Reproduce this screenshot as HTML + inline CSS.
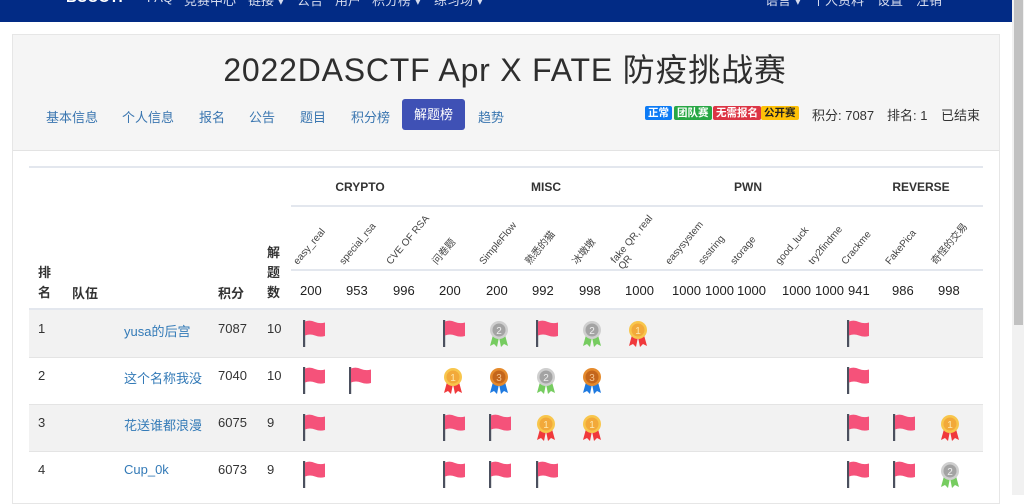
<!DOCTYPE html>
<html><head><meta charset="utf-8"><style>
*{margin:0;padding:0;box-sizing:border-box}
body{width:1024px;height:495px;overflow:hidden;background:#fff;font-family:"Liberation Sans","Noto Sans CJK SC",sans-serif;position:relative;color:#333}
.a{position:absolute;white-space:nowrap}
.nav{position:absolute;left:0;top:0;width:1012px;height:22px;background:#022b85;overflow:hidden}
.nav span{position:absolute;top:-10px;color:#d6dcee;font-size:13px}
.sb{position:absolute;left:1012px;top:0;width:12px;height:495px;background:#f1f1f1}
.sb div{position:absolute;left:2px;top:0;width:9px;height:325px;background:#c1c1c1}
.card{position:absolute;left:12px;top:34px;width:988px;height:470px;border:1px solid #e6e6e6;background:#fff}
.hd{position:absolute;left:0;top:0;width:986px;height:116px;background:#f5f5f5;border-bottom:1px solid #e3e3e3}
.tab{position:absolute;top:107px;color:#3a76b0;font-size:13px}
.bd{position:absolute;top:106px;height:14px;font-size:10.5px;font-weight:bold;color:#fff;border-radius:2px;padding:0 3px;line-height:14px}
.hl{position:absolute;height:2px;background:#e3e7ee}
.th{position:absolute;font-size:13px;font-weight:bold;color:#333}
.cat{position:absolute;top:180px;font-size:12px;font-weight:bold;color:#333;transform:translateX(-50%)}
.pn{position:absolute;font-size:10px;color:#444;transform-origin:0 100%;transform:rotate(-50deg);white-space:nowrap;line-height:10px}
.sc{position:absolute;top:283px;font-size:13px;color:#222}
.row{position:absolute;left:29px;width:954px;height:47px}
.td{position:absolute;font-size:13px;color:#333}
.tm{color:#337ab7}
svg.i{position:absolute}
</style></head><body>
<svg width="0" height="0" style="position:absolute">
<defs>
<symbol id="f" viewBox="0 0 22 27"><rect x="0" y="0" width="2.2" height="27" fill="#4b505e"/><path d="M2 1.5Q7 -0.5 12 2Q17 4 22 2.5L22 16Q17 17.5 12 15.5Q7 13.5 2 15.5Z" fill="#f5527a"/></symbol>
<symbol id="m1" viewBox="0 0 20 28"><path d="M4 15L1 26L5 24L8 27L10 17Z" fill="#f0393c"/><path d="M16 15L19 26L15 24L12 27L10 17Z" fill="#f0393c"/><circle cx="10" cy="10" r="9" fill="#f8c64c"/><circle cx="10" cy="10" r="6.5" fill="#f2a93a"/><text x="10" y="14" font-size="10" text-anchor="middle" fill="#fde9b0" font-family="Liberation Sans">1</text></symbol>
<symbol id="m2" viewBox="0 0 20 28"><path d="M4 15L1 26L5 24L8 27L10 17Z" fill="#76cc60"/><path d="M16 15L19 26L15 24L12 27L10 17Z" fill="#76cc60"/><circle cx="10" cy="10" r="9" fill="#cfcfcf"/><circle cx="10" cy="10" r="6.5" fill="#a3a3a3"/><text x="10" y="14" font-size="10" text-anchor="middle" fill="#eee" font-family="Liberation Sans">2</text></symbol>
<symbol id="m3" viewBox="0 0 20 28"><path d="M4 15L1 26L5 24L8 27L10 17Z" fill="#1f7ae0"/><path d="M16 15L19 26L15 24L12 27L10 17Z" fill="#1f7ae0"/><circle cx="10" cy="10" r="9" fill="#e58a2c"/><circle cx="10" cy="10" r="6.5" fill="#c4661c"/><text x="10" y="14" font-size="10" text-anchor="middle" fill="#f6c48e" font-family="Liberation Sans">3</text></symbol>
</defs></svg>
<div class="nav">
<span style="left:66px;color:#fff;font-weight:bold;font-size:15px;top:-11px">BUUCTF</span>
<span style="left:147px">FAQ</span><span style="left:184px">竞赛中心</span><span style="left:248px">链接 ▾</span><span style="left:297px">公告</span><span style="left:335px">用户</span><span style="left:372px">积分榜 ▾</span><span style="left:434px">练习场 ▾</span>
<span style="left:765px">语言 ▾</span><span style="left:812px">个人资料</span><span style="left:877px">设置</span><span style="left:916px">注销</span>
</div>
<div class="sb"><div></div></div>
<div class="card"><div class="hd"></div></div>
<div class="a" style="left:0;width:1012px;top:45px;text-align:center;font-size:32px;color:#2e2e2e;letter-spacing:0.8px;padding-right:2px">2022DASCTF Apr X FATE 防疫挑战赛</div>
<span class="tab" style="left:46px">基本信息</span><span class="tab" style="left:122px">个人信息</span><span class="tab" style="left:199px">报名</span><span class="tab" style="left:249px">公告</span><span class="tab" style="left:300px">题目</span><span class="tab" style="left:351px">积分榜</span>
<div class="a" style="left:402px;top:99px;width:63px;height:31px;background:#3f51b5;border-radius:3px;color:#fff;font-size:13px;text-align:center;line-height:31px">解题榜</div>
<span class="tab" style="left:478px">趋势</span>
<span class="bd" style="left:645px;background:#0d7bf5">正常</span><span class="bd" style="left:674px;background:#28a745">团队赛</span><span class="bd" style="left:713px;background:#dc3545">无需报名</span><span class="bd" style="left:761px;background:#fec107;color:#222">公开赛</span>
<span class="a" style="left:812px;top:105px;font-size:13px">积分: 7087</span><span class="a" style="left:887px;top:105px;font-size:13px">排名: 1</span><span class="a" style="left:941px;top:105px;font-size:13px">已结束</span>

<div class="hl" style="left:29px;top:166px;width:954px"></div>
<div class="hl" style="left:291px;top:205px;width:692px"></div>
<div class="hl" style="left:291px;top:269px;width:692px"></div>
<div class="hl" style="left:29px;top:308px;width:954px"></div>
<span class="cat" style="left:360px">CRYPTO</span><span class="cat" style="left:546px">MISC</span><span class="cat" style="left:748px">PWN</span><span class="cat" style="left:921px">REVERSE</span>
<span class="th" style="left:38px;top:263px;line-height:20px">排<br>名</span>
<span class="th" style="left:72px;top:283px">队伍</span><span class="th" style="left:218px;top:283px">积分</span>
<span class="th" style="left:267px;top:243px;line-height:20px">解<br>题<br>数</span>

<span class="pn" style="left:300px;top:257px">easy_real</span>
<span class="pn" style="left:346px;top:257px">special_rsa</span>
<span class="pn" style="left:393px;top:257px">CVE OF RSA</span>
<span class="pn" style="left:439px;top:257px">问卷题</span>
<span class="pn" style="left:486px;top:257px">SimpleFlow</span>
<span class="pn" style="left:532px;top:257px">熟悉的猫</span>
<span class="pn" style="left:579px;top:257px">冰墩墩</span>
<span class="pn" style="left:625px;top:252px">fake QR, real<br>QR</span>
<span class="pn" style="left:672px;top:257px">easysystem</span>
<span class="pn" style="left:705px;top:257px">ssstring</span>
<span class="pn" style="left:737px;top:257px">storage</span>
<span class="pn" style="left:782px;top:257px">good_luck</span>
<span class="pn" style="left:815px;top:257px">try2findme</span>
<span class="pn" style="left:848px;top:257px">Crackme</span>
<span class="pn" style="left:892px;top:257px">FakePica</span>
<span class="pn" style="left:938px;top:257px">奇怪的交易</span>

<span class="sc" style="left:300px">200</span><span class="sc" style="left:346px">953</span><span class="sc" style="left:393px">996</span><span class="sc" style="left:439px">200</span><span class="sc" style="left:486px">200</span><span class="sc" style="left:532px">992</span><span class="sc" style="left:579px">998</span><span class="sc" style="left:625px">1000</span><span class="sc" style="left:672px">1000</span><span class="sc" style="left:705px">1000</span><span class="sc" style="left:737px">1000</span><span class="sc" style="left:782px">1000</span><span class="sc" style="left:815px">1000</span><span class="sc" style="left:848px">941</span><span class="sc" style="left:892px">986</span><span class="sc" style="left:938px">998</span>

<div class="row" style="top:310px;background:#f2f2f2"></div>
<div class="row" style="top:357px;border-top:1px solid #e4e4e4"></div>
<div class="row" style="top:404px;background:#f2f2f2;border-top:1px solid #e4e4e4"></div>
<div class="row" style="top:451px;border-top:1px solid #e4e4e4"></div>

<span class="td" style="left:38px;top:321px">1</span><span class="td tm" style="left:124px;top:321px">yusa的后宫</span><span class="td" style="left:218px;top:321px">7087</span><span class="td" style="left:267px;top:321px">10</span>
<span class="td" style="left:38px;top:368px">2</span><span class="td tm" style="left:124px;top:368px">这个名称我没</span><span class="td" style="left:218px;top:368px">7040</span><span class="td" style="left:267px;top:368px">10</span>
<span class="td" style="left:38px;top:415px">3</span><span class="td tm" style="left:124px;top:415px">花送谁都浪漫</span><span class="td" style="left:218px;top:415px">6075</span><span class="td" style="left:267px;top:415px">9</span>
<span class="td" style="left:38px;top:462px">4</span><span class="td tm" style="left:124px;top:462px">Cup_0k</span><span class="td" style="left:218px;top:462px">6073</span><span class="td" style="left:267px;top:462px">9</span>

<svg class="i" style="left:303px;top:320px" width="22" height="27"><use href="#f"/></svg>
<svg class="i" style="left:443px;top:320px" width="22" height="27"><use href="#f"/></svg>
<svg class="i" style="left:536px;top:320px" width="22" height="27"><use href="#f"/></svg>
<svg class="i" style="left:847px;top:320px" width="22" height="27"><use href="#f"/></svg>
<svg class="i" style="left:489px;top:320px" width="20" height="28"><use href="#m2"/></svg>
<svg class="i" style="left:582px;top:320px" width="20" height="28"><use href="#m2"/></svg>
<svg class="i" style="left:628px;top:320px" width="20" height="28"><use href="#m1"/></svg>

<svg class="i" style="left:303px;top:367px" width="22" height="27"><use href="#f"/></svg>
<svg class="i" style="left:349px;top:367px" width="22" height="27"><use href="#f"/></svg>
<svg class="i" style="left:847px;top:367px" width="22" height="27"><use href="#f"/></svg>
<svg class="i" style="left:443px;top:367px" width="20" height="28"><use href="#m1"/></svg>
<svg class="i" style="left:489px;top:367px" width="20" height="28"><use href="#m3"/></svg>
<svg class="i" style="left:536px;top:367px" width="20" height="28"><use href="#m2"/></svg>
<svg class="i" style="left:582px;top:367px" width="20" height="28"><use href="#m3"/></svg>

<svg class="i" style="left:303px;top:414px" width="22" height="27"><use href="#f"/></svg>
<svg class="i" style="left:443px;top:414px" width="22" height="27"><use href="#f"/></svg>
<svg class="i" style="left:489px;top:414px" width="22" height="27"><use href="#f"/></svg>
<svg class="i" style="left:847px;top:414px" width="22" height="27"><use href="#f"/></svg>
<svg class="i" style="left:893px;top:414px" width="22" height="27"><use href="#f"/></svg>
<svg class="i" style="left:536px;top:414px" width="20" height="28"><use href="#m1"/></svg>
<svg class="i" style="left:582px;top:414px" width="20" height="28"><use href="#m1"/></svg>
<svg class="i" style="left:940px;top:414px" width="20" height="28"><use href="#m1"/></svg>

<svg class="i" style="left:303px;top:461px" width="22" height="27"><use href="#f"/></svg>
<svg class="i" style="left:443px;top:461px" width="22" height="27"><use href="#f"/></svg>
<svg class="i" style="left:489px;top:461px" width="22" height="27"><use href="#f"/></svg>
<svg class="i" style="left:536px;top:461px" width="22" height="27"><use href="#f"/></svg>
<svg class="i" style="left:847px;top:461px" width="22" height="27"><use href="#f"/></svg>
<svg class="i" style="left:893px;top:461px" width="22" height="27"><use href="#f"/></svg>
<svg class="i" style="left:940px;top:461px" width="20" height="28"><use href="#m2"/></svg>
</body></html>
